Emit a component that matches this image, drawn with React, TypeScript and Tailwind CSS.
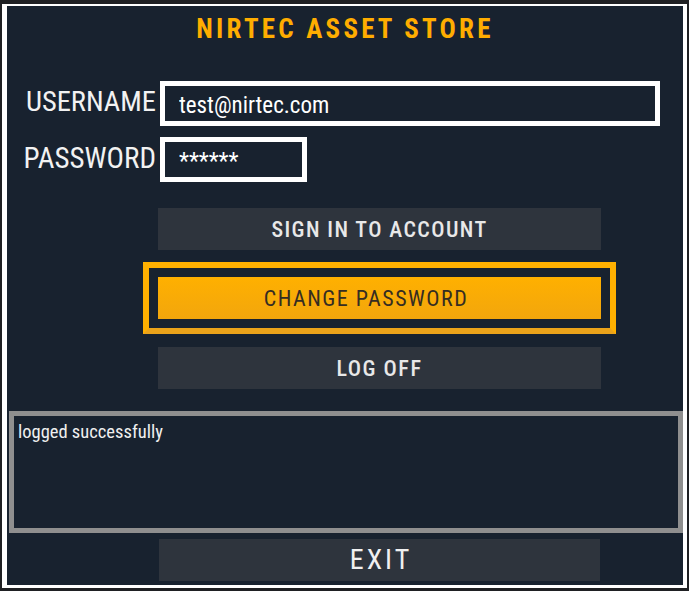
import { useState } from "react";

const buttonBase =
  "flex items-center justify-center h-[42px] mx-[15px] bg-[#2e343d] text-[#e8e8e8]";

export default function App() {
  const [username, setUsername] = useState("test@nirtec.com");
  const [password, setPassword] = useState("******");
  const [message] = useState("logged successfully");

  return (
    <div className="w-[689px] h-[591px] bg-[#1f2023] pt-[4px] pl-[2px] pr-[2px] pb-[3px] font-['Roboto_Condensed','Roboto',sans-serif]">
      <div className="h-full bg-white pt-[2px] pl-[5px] pr-[4px] pb-[3px]">
        <div className="h-full bg-[#18222f] flex flex-col">
          {/* header */}
          <div className="h-[75px] pt-[10px] text-center">
            <h1 className="text-[27px] leading-[27px] font-bold tracking-[3.2px] text-[#ffad00]">
              NIRTEC ASSET STORE
            </h1>
          </div>

          {/* login form */}
          <div className="flex flex-col gap-[11px]">
            <div className="flex items-center h-[45px]">
              <label className="w-[149px] pb-[3px] text-right text-[28.5px] leading-none text-[#f2f2f2]">
                USERNAME
              </label>
              <input
                value={username}
                onChange={(e) => setUsername(e.target.value)}
                className="ml-[4px] w-[500px] h-[45px] border-[5px] border-white bg-[#18222f] pl-[14px] pt-[3px] text-[23px] text-white outline-none"
              />
            </div>
            <div className="flex items-center h-[45px]">
              <label className="w-[149px] pb-[3px] text-right text-[29px] leading-none text-[#f2f2f2]">
                PASSWORD
              </label>
              <input
                value={password}
                onChange={(e) => setPassword(e.target.value)}
                className="ml-[4px] w-[147px] h-[45px] border-[5px] border-white bg-[#18222f] pl-[14px] pt-[3px] text-[23px] text-white outline-none"
              />
            </div>
          </div>

          {/* actions */}
          <div className="ml-[136px] w-[473px] flex flex-col">
            <button className={`${buttonBase} mt-[26px] text-[22px] font-medium tracking-[1.4px]`}>
              SIGN IN TO ACCOUNT
            </button>
            <div className="mt-[12px] border-[6px] border-[#ffb000] border-b-[#eba31a] p-[9px]">
              <button className="flex items-center justify-center w-full h-[42px] pr-[27px] bg-gradient-to-b from-[#ffb000] to-[#f2a60c] text-[22px] tracking-[1.5px] text-[#352d22]">
                CHANGE PASSWORD
              </button>
            </div>
            <button className={`${buttonBase} mt-[13px] h-[41px] text-[22px] font-medium tracking-[1.5px]`}>
              LOG OFF
            </button>
          </div>

          {/* status output */}
          <div className="mt-[22px] ml-[2px] h-[122px] border-[5px] border-[#8f8f8f] px-[4px] pt-[5px] text-[18.5px] leading-tight text-[#f0f0f0]">
            {message}
          </div>

          <button className="mt-[6px] ml-[152px] w-[441px] h-[42px] pl-[3px] flex items-center justify-center bg-[#2e343d] text-[28px] tracking-[3px] text-[#f0f0f0]">
            EXIT
          </button>
        </div>
      </div>
    </div>
  );
}
